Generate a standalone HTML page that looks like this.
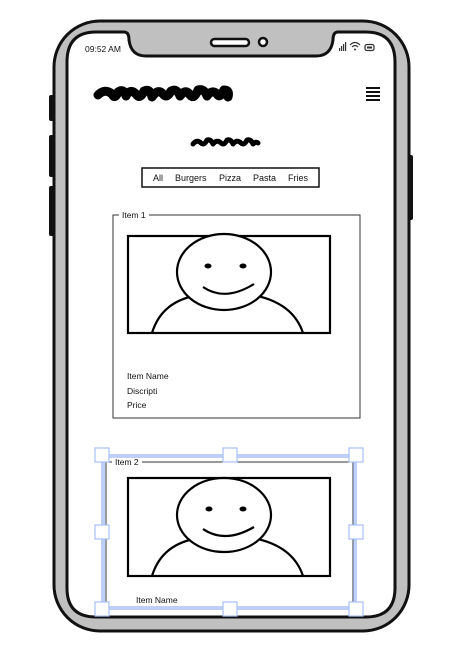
<!DOCTYPE html>
<html><head><meta charset="utf-8"><style>
html,body{margin:0;padding:0;background:#fff;width:465px;height:653px;overflow:hidden}
svg{display:block}
text{font-family:"Liberation Sans",sans-serif;fill:#111}
</style></head><body>
<svg width="465" height="653" viewBox="0 0 465 653" xmlns="http://www.w3.org/2000/svg">
<!-- side buttons -->
<g fill="#111">
<rect x="49" y="95" width="5" height="26" rx="2"/>
<rect x="49" y="135" width="5" height="42" rx="2"/>
<rect x="49" y="186" width="5" height="50" rx="2"/>
<rect x="408" y="155" width="5" height="65" rx="2"/>
</g>
<!-- phone body -->
<rect x="54" y="21" width="355" height="610" rx="46" fill="#c0c0c0" stroke="#111" stroke-width="3"/>
<path d="M96 32 H124 Q129 32 129 40 Q131 56 146 56 H316 Q331 56 333 40 Q333 32 338 32 H366 Q395 32 395 62 V588 Q395 617 366 617 H96 Q67 617 67 588 V62 Q67 32 96 32 Z" fill="#fff" stroke="#111" stroke-width="3"/>
<rect x="211" y="39" width="38" height="7" rx="3.5" fill="#fff" stroke="#111" stroke-width="2.5"/>
<circle cx="263" cy="42" r="4" fill="#fff" stroke="#111" stroke-width="2.5"/>
<text x="85" y="52" font-size="8.5">09:52 AM</text>
<g fill="#333"><rect x="339" y="48" width="1.2" height="3"/><rect x="341" y="46" width="1.2" height="5"/><rect x="343" y="44" width="1.2" height="7"/><rect x="345" y="42" width="1.2" height="9"/></g>
<path d="M350 45 Q355 40 360 45 M352 47 Q355 44 358 47" fill="none" stroke="#333" stroke-width="1.2"/><circle cx="355" cy="49.5" r="1" fill="#333"/>
<rect x="365" y="44.5" width="9" height="6" rx="2" fill="none" stroke="#333" stroke-width="1.3"/><rect x="367" y="46.5" width="5" height="2" fill="#333"/>
<!-- scribbles -->
<path d="M98 95 Q105 88 112 94 Q115 100 118 92 Q124 88 126 96 Q130 88 136 94 Q140 100 144 91 Q150 88 152 97 Q158 88 163 94 Q167 99 171 91 Q177 88 180 96 Q186 88 190 95 Q194 100 198 90 Q204 88 207 96 Q212 89 217 94 Q220 99 224 90 Q230 90 228 97" fill="none" stroke="#000" stroke-width="9" stroke-linecap="round" stroke-linejoin="round"/>
<path d="M193 144 Q197 139 201 143 Q204 146 207 140 Q211 139 213 144 Q217 139 221 143 Q224 146 227 140 Q231 139 233 144 Q237 139 241 143 Q244 146 247 140 Q251 139 253 144 Q256 141 258 143" fill="none" stroke="#000" stroke-width="5" stroke-linecap="round" stroke-linejoin="round"/>
<!-- hamburger -->
<g fill="#111"><rect x="366" y="87" width="14" height="2"/><rect x="366" y="91" width="14" height="2"/><rect x="366" y="95" width="14" height="2"/><rect x="366" y="99" width="14" height="2"/></g>
<!-- tabs -->
<rect x="142" y="168" width="177" height="19" fill="#fff" stroke="#111" stroke-width="1.5"/>
<g font-size="9"><text x="153" y="181">All</text><text x="175" y="181">Burgers</text><text x="219" y="181">Pizza</text><text x="253" y="181">Pasta</text><text x="288" y="181">Fries</text></g>
<!-- item 1 -->
<rect x="113" y="215" width="247" height="203" fill="none" stroke="#333" stroke-width="1"/>
<rect x="119" y="210" width="30" height="10" fill="#fff"/>
<text x="122" y="218" font-size="8.5">Item 1</text>
<g fill="none" stroke="#000" stroke-width="2.2">
<rect x="128" y="236" width="202" height="97"/>
<path d="M152 333 Q162 300 200 295 M246 294 Q292 300 303 333"/>
<ellipse cx="224" cy="272" rx="47" ry="38" fill="#fff"/>
<path d="M203 287 Q225 302 254 284"/>
</g>
<ellipse cx="208" cy="266" rx="3.5" ry="2.5"/><ellipse cx="243" cy="266" rx="3.5" ry="2.5"/>
<text x="127" y="379" font-size="8.5">Item Name</text>
<text x="127" y="394" font-size="8.5">Discripti</text>
<text x="127" y="408" font-size="8.5">Price</text>
<!-- item 2 -->
<rect x="106" y="462" width="247" height="145" fill="none" stroke="#333" stroke-width="1"/>
<rect x="112" y="457" width="30" height="10" fill="#fff"/>
<text x="115" y="465" font-size="8.5">Item 2</text>
<g fill="none" stroke="#000" stroke-width="2.2">
<rect x="128" y="478" width="202" height="98"/>
<path d="M152 576 Q162 543 200 538 M246 537 Q292 543 303 576"/>
<ellipse cx="224" cy="515" rx="47" ry="37" fill="#fff"/>
<path d="M203 529 Q225 544 254 527"/>
</g>
<ellipse cx="209" cy="509" rx="3.5" ry="2.5"/><ellipse cx="243" cy="509" rx="3.5" ry="2.5"/>
<text x="136" y="603" font-size="8.5">Item Name</text>
<!-- selection -->
<g fill="none" stroke="#a8c0f8" stroke-width="1.5">
<rect x="102" y="455" width="254" height="154"/><rect x="104" y="457" width="250" height="150"/>
</g>
<g fill="#fff" stroke="#a8c0f8" stroke-width="1.2">
<rect x="95" y="448" width="14" height="14"/><rect x="223" y="448" width="14" height="14"/><rect x="349" y="448" width="14" height="14"/>
<rect x="95" y="525" width="14" height="14"/><rect x="349" y="525" width="14" height="14"/>
<rect x="95" y="602" width="14" height="14"/><rect x="223" y="602" width="14" height="14"/><rect x="349" y="602" width="14" height="14"/>
</g>
</svg>
</body></html>
